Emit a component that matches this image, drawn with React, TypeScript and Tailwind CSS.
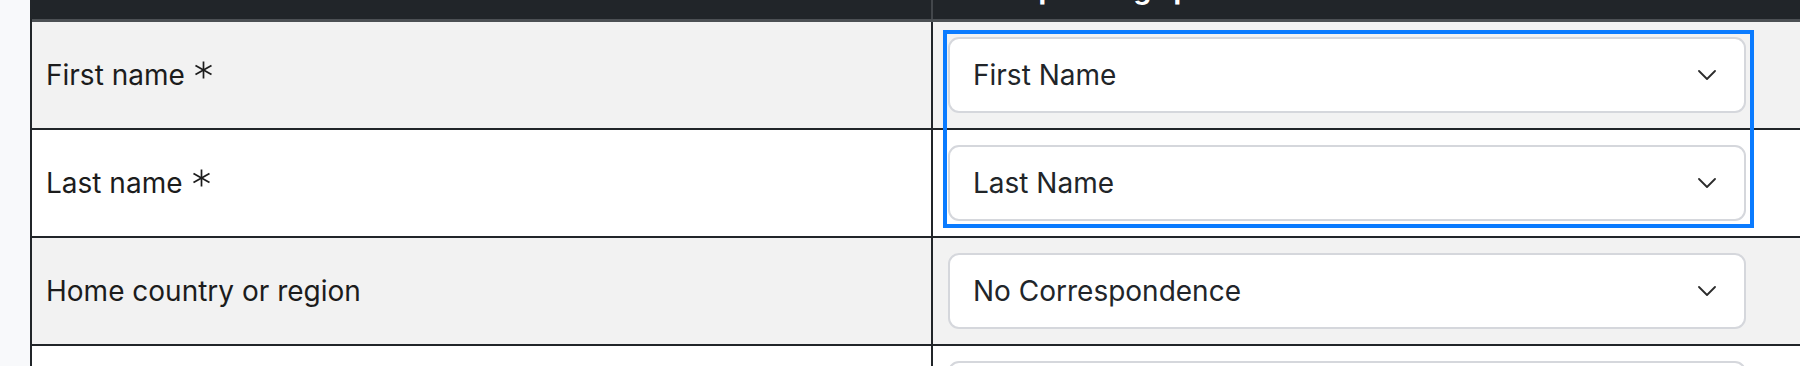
import React from "react";

const font = { fontFamily: "Inter, 'Noto Sans', 'Liberation Sans', sans-serif" };

function Asterisk() {
  return (
    <svg width="19" height="18" viewBox="0 0 19 18" className="ml-[9px] -mt-[10px]" fill="none" stroke="#1c1c1c" strokeWidth="1.7" strokeLinecap="butt">
      <line x1="9.5" y1="0.5" x2="9.5" y2="17.5" />
      <line x1="1.5" y1="4.4" x2="17.5" y2="13.6" />
      <line x1="1.5" y1="13.6" x2="17.5" y2="4.4" />
    </svg>
  );
}

function Chevron() {
  return (
    <svg width="18" height="10" viewBox="0 0 18 10" fill="none" stroke="#2b2b2b" strokeWidth="1.8" strokeLinecap="round" strokeLinejoin="round">
      <path d="M1 1 L9 9 L17 1" />
    </svg>
  );
}

type Row = { label: string; required?: boolean; value: string };

const rows: Row[] = [
  { label: "First name", required: true, value: "First Name" },
  { label: "Last name", required: true, value: "Last Name" },
  { label: "Home country or region", value: "No Correspondence" },
  { label: "Email", value: "Email" },
];

export default function App() {
  return (
    <div className="w-[1800px] h-[366px] overflow-hidden bg-[#f8f9fb] flex" style={font}>
      <div className="w-[30px] shrink-0" />
      <div className="relative flex-1 border-l-2 border-[#212529] flex flex-col">
        {/* header */}
        <div className="h-[22px] shrink-0 bg-[#212529] border-b-[3px] border-[#4c5054] grid grid-cols-[901px_1fr] overflow-hidden">
          <div className="border-r-2 border-[#43474b] overflow-hidden">
            <div className="-mt-[25px] pl-[14px] text-[28px] leading-none font-bold text-white">Field</div>
          </div>
          <div className="overflow-hidden">
            <div className="-mt-[25px] pl-[13px] text-[28px] leading-none font-bold text-white whitespace-nowrap">
              Corresponding spreadsheet column
            </div>
          </div>
        </div>
        {/* body */}
        {rows.map((r, i) => (
          <div
            key={r.label}
            className={
              "grid grid-cols-[901px_1fr] border-b-2 border-[#212529] shrink-0 " +
              (i % 2 === 0 ? "bg-[#f2f2f2]" : "bg-white")
            }
          >
            <div className="border-r-2 border-[#212529] flex items-center pl-[14px] text-[28px] text-[#1c1c1c]">
              <span>{r.label}</span>
              {r.required && <Asterisk />}
            </div>
            <div className="py-[15px] pl-[15px]">
              <div className="w-[798px] h-[76px] rounded-[11px] border-2 border-[#d5d7dc] bg-white flex items-center justify-between pl-[23px] pr-[28px] text-[28px] text-[#212529]">
                <span>{r.value}</span>
                <Chevron />
              </div>
            </div>
          </div>
        ))}
        {/* highlight overlay */}
        <div className="absolute left-[911px] top-[30px] w-[811px] h-[198px] border-4 border-[#0a7bff] pointer-events-none" />
      </div>
    </div>
  );
}
